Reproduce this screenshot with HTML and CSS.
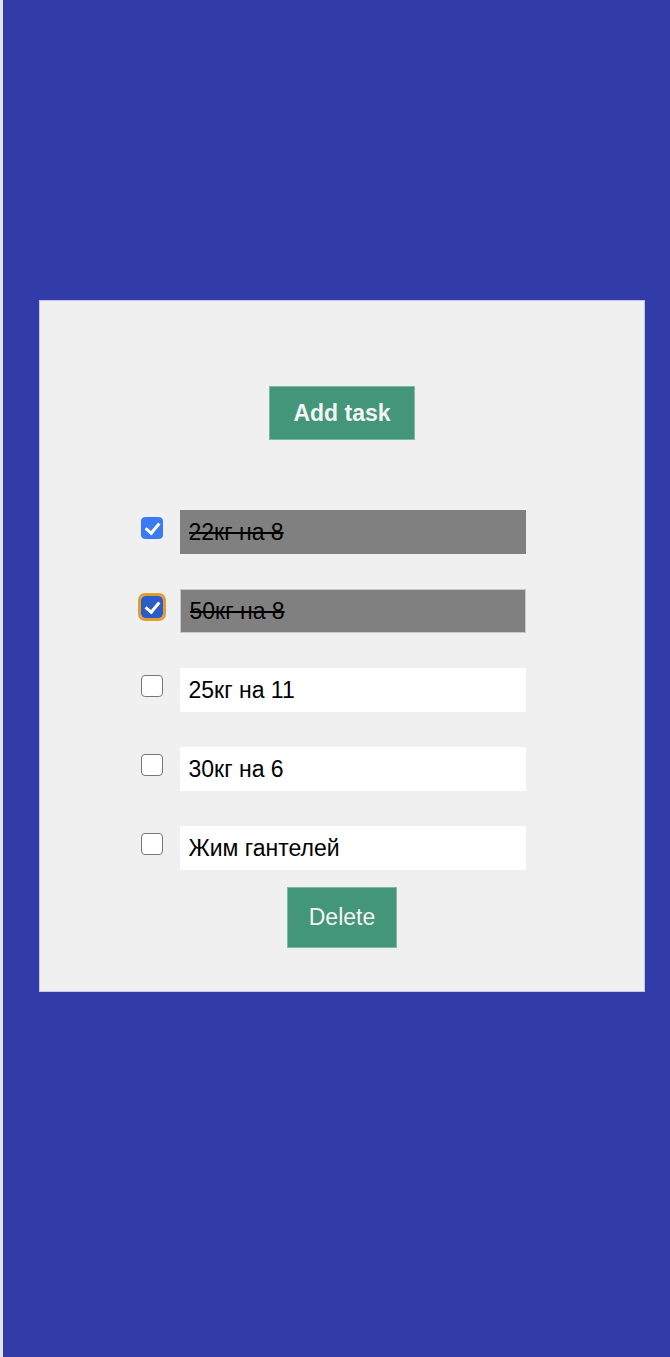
FILE: index.html
```html
<!DOCTYPE html>
<html lang="ru">
<head>
    <meta charset="UTF-8">
    <title>Todo</title>
    <link rel="stylesheet" href="styles.css">
</head>
<body>
<div class="screen">
    <div class="card">
        <button class="btn btn_add" type="button">Add task</button>
        <ul class="tasks">
            <li class="task">
                <input type="checkbox" class="check" checked>
                <input type="text" class="task_text done" value="22кг на 8">
            </li>
            <li class="task">
                <input type="checkbox" class="check check_focus" checked>
                <input type="text" class="task_text done edged" value="50кг на 8">
            </li>
            <li class="task">
                <input type="checkbox" class="check">
                <input type="text" class="task_text" value="25кг на 11">
            </li>
            <li class="task">
                <input type="checkbox" class="check">
                <input type="text" class="task_text" value="30кг на 6">
            </li>
            <li class="task">
                <input type="checkbox" class="check">
                <input type="text" class="task_text" value="Жим гантелей">
            </li>
        </ul>
        <button class="btn btn_delete" type="button">Delete</button>
    </div>
</div>
</body>
</html>
```

FILE: styles.css
```css
*{box-sizing: border-box;}
html{background: #e4e4e4;}
body{margin: 0;
    font-family: "Liberation Sans", Arial, sans-serif;}
.screen{margin-left: 3px;
    min-height: 1357px;
    background: #323ca9;
    padding-top: 300px;}
.card{margin-left: 36px;
    width: 606px;
    height: 692px;
    background: #f0f0f0;
    border: 1px solid #c3c6e6;
    padding-top: 85px;
    display: flex;
    flex-direction: column;
    align-items: center;}
.btn{background: #43967a;
    color: #f4f4f4;
    border: 1px solid #7cbaa2;
    font-family: "Liberation Sans", Arial, sans-serif;
    font-size: 23px;
    padding: 0;
    margin: 0;}
.btn_add{width: 146px;
    height: 54px;
    font-weight: bold;}
.btn_delete{width: 110px;
    height: 61px;
    margin-top: 17px;}
.tasks{list-style: none;
    margin: 70px 18px 0 0;
    padding: 0;
    display: flex;
    flex-direction: column;
    gap: 35px;}
.task{display: flex;
    align-items: center;
    gap: 17px;}
.check{appearance: none;
    -webkit-appearance: none;
    width: 22px;
    height: 22px;
    margin: 0 0 8px 0;
    border: 1.5px solid #767676;
    border-radius: 4px;
    background: #fff;
    position: relative;}
.check:checked{background: #3a7bf5;
    border-color: #3a7bf5;}
.check:checked::after{content: "";
    position: absolute;
    left: 6px;
    top: 2px;
    width: 6px;
    height: 11px;
    border: solid #fff;
    border-width: 0 3px 3px 0;
    transform: rotate(40deg);}
.check_focus{outline: 3px solid #e39d2e;
    outline-offset: 0;
    border-radius: 4px;}
.check_focus:checked{background: #2b5cc9;
    border-color: #2b5cc9;}
.task_text{width: 346px;
    height: 44px;
    border: none;
    background: #fff;
    padding: 0 9px;
    font-family: "Liberation Sans", Arial, sans-serif;
    font-size: 23px;
    color: #000;
    outline: none;}
.done{background: #808080;
    text-decoration: line-through;}
.edged{border: 1px solid #c9c9c9;}
```
